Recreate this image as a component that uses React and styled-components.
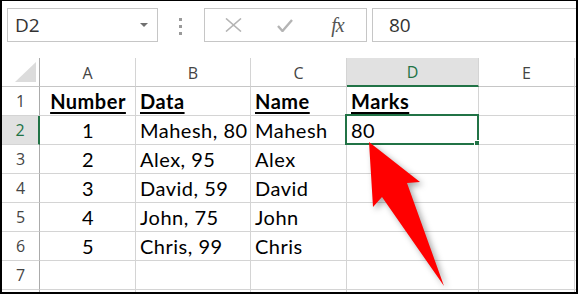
import React from 'react';
import styled, { createGlobalStyle } from 'styled-components';

const GlobalStyle = createGlobalStyle`
  body {
    margin: 0;
    background: #ffffff;
    font-family: 'Lato', 'Liberation Sans', sans-serif;
  }
`;

const Frame = styled.div`
  position: relative;
  width: 578px;
  height: 294px;
  box-sizing: border-box;
  border-style: solid;
  border-color: #000000;
  border-width: 1px 2px 2px 2px;
  background: #ffffff;
  overflow: hidden;
`;

const Toolbar = styled.div`
  display: flex;
  align-items: flex-start;
  height: 57px;
  box-sizing: border-box;
  padding: 7px 0 0 5px;
`;

const NameBox = styled.div`
  display: flex;
  align-items: center;
  justify-content: space-between;
  width: 151px;
  height: 34px;
  box-sizing: border-box;
  border: 1px solid #c6c6c6;
  padding: 0 9px 0 7px;
  font-family: 'Open Sans', 'Noto Sans', sans-serif;
  font-size: 19px;
  color: #333333;
`;

const DropArrow = styled.span`
  width: 0;
  height: 0;
  border-left: 4px solid transparent;
  border-right: 4px solid transparent;
  border-top: 4px solid #707070;
`;

const Dots = styled.div`
  display: flex;
  flex-direction: column;
  gap: 4px;
  margin: 10px 0 0 21px;
  span {
    width: 3px;
    height: 3px;
    background: #9a9a9a;
  }
`;

const ButtonGroup = styled.div`
  display: flex;
  align-items: center;
  width: 163px;
  height: 34px;
  box-sizing: border-box;
  margin-left: 22px;
  border: 1px solid #c6c6c6;
`;

const IconSlot = styled.div`
  display: flex;
  align-items: center;
  justify-content: center;
  width: ${(p) => p.$w}px;
  height: 100%;
`;

const Fx = styled.span`
  font-family: 'Liberation Serif', serif;
  font-style: italic;
  font-size: 20px;
  color: #555555;
  letter-spacing: -1px;
`;

const FormulaInput = styled.div`
  display: flex;
  align-items: center;
  flex: 1;
  height: 34px;
  box-sizing: border-box;
  margin-left: 5px;
  border: 1px solid #c6c6c6;
  border-right: none;
  padding-left: 16px;
  font-family: 'Open Sans', 'Noto Sans', sans-serif;
  font-size: 19px;
  color: #333333;
`;

const Sheet = styled.div`
  display: grid;
  grid-template-columns: 38px 96px 115px 96px 132px 96px 1fr;
  grid-auto-rows: 29px;
`;

const Cell = styled.div`
  position: relative;
  display: flex;
  align-items: flex-end;
  justify-content: ${(p) => (p.$center ? 'center' : 'flex-start')};
  box-sizing: border-box;
  border-right: 1px solid #d4d4d4;
  border-bottom: 1px solid #d4d4d4;
  padding: 0 3px 3px 4px;
  font-family: 'Lato', 'Liberation Sans', sans-serif;
  font-size: 20px;
  letter-spacing: 0.5px;
  line-height: 21px;
  color: #000000;
  white-space: nowrap;
  font-weight: ${(p) => (p.$head ? 700 : 400)};
  text-decoration: ${(p) => (p.$head ? 'underline' : 'none')};
  text-underline-offset: 3px;
  text-decoration-thickness: 2px;
`;

const ColHead = styled.div`
  display: flex;
  align-items: center;
  justify-content: center;
  box-sizing: border-box;
  border-right: 1px solid #d4d4d4;
  border-bottom: ${(p) => (p.$active ? '2px solid #217346' : '1px solid #c6c6c6')};
  background: ${(p) => (p.$active ? '#e1e1e1' : '#ffffff')};
  color: ${(p) => (p.$active ? '#217346' : '#444444')};
  font-family: 'Open Sans', 'Noto Sans', sans-serif;
  font-size: 16px;
  padding-top: 1px;
`;

const RowHead = styled.div`
  display: flex;
  align-items: center;
  justify-content: center;
  box-sizing: border-box;
  border-right: ${(p) => (p.$active ? '2px solid #217346' : '1px solid #ababab')};
  border-bottom: 1px solid #d4d4d4;
  background: ${(p) => (p.$active ? '#e1e1e1' : '#ffffff')};
  color: ${(p) => (p.$active ? '#217346' : '#444444')};
  font-family: 'Open Sans', 'Noto Sans', sans-serif;
  font-size: 16px;
`;

const Corner = styled.div`
  display: flex;
  align-items: flex-end;
  justify-content: flex-end;
  box-sizing: border-box;
  padding: 0 3px 4px 0;
  border-right: 1px solid #ababab;
  border-bottom: 1px solid #c6c6c6;
  &::after {
    content: '';
    width: 21px;
    height: 20px;
    background: #dcdcdc;
    clip-path: polygon(100% 0, 100% 100%, 0 100%);
  }
`;

const Selection = styled.div`
  position: absolute;
  top: -2px;
  left: -2px;
  right: -1px;
  bottom: -1px;
  border: 2px solid #217346;
  &::after {
    content: '';
    position: absolute;
    right: -3px;
    bottom: -3px;
    width: 6px;
    height: 6px;
    background: #217346;
    border: 1px solid #ffffff;
    box-sizing: border-box;
  }
`;

const ArrowLayer = styled.svg`
  position: absolute;
  top: -1px;
  left: -2px;
  width: 578px;
  height: 294px;
  pointer-events: none;
  filter: drop-shadow(3px 3px 3px rgba(0, 0, 0, 0.35));
`;

const columns = ['A', 'B', 'C', 'D', 'E', ''];

const rows = [
  { n: 1, head: true, cells: ['Number', 'Data', 'Name', 'Marks', '', ''] },
  { n: 2, cells: ['1', 'Mahesh, 80', 'Mahesh', '80', '', ''] },
  { n: 3, cells: ['2', 'Alex, 95', 'Alex', '', '', ''] },
  { n: 4, cells: ['3', 'David, 59', 'David', '', '', ''] },
  { n: 5, cells: ['4', 'John, 75', 'John', '', '', ''] },
  { n: 6, cells: ['5', 'Chris, 99', 'Chris', '', '', ''] },
  { n: 7, cells: ['', '', '', '', '', ''] },
  { n: 8, hidden: true, cells: ['', '', '', '', '', ''] },
];

export default function App() {
  return (
    <Frame>
      <GlobalStyle />
      <Toolbar>
        <NameBox>
          D2
          <DropArrow />
        </NameBox>
        <Dots>
          <span />
          <span />
          <span />
        </Dots>
        <ButtonGroup>
          <IconSlot $w={56}>
            <svg width="17" height="14" viewBox="0 0 17 14">
              <path d="M1 0.5 L16 13.5 M16 0.5 L1 13.5" stroke="#b4b4b4" strokeWidth="1.6" fill="none" />
            </svg>
          </IconSlot>
          <IconSlot $w={48}>
            <svg width="16" height="13" viewBox="0 0 16 13">
              <path d="M1 7 L5.5 12 L15 1" stroke="#b4b4b4" strokeWidth="2.4" fill="none" />
            </svg>
          </IconSlot>
          <IconSlot $w={57}>
            <Fx>fx</Fx>
          </IconSlot>
        </ButtonGroup>
        <FormulaInput>80</FormulaInput>
      </Toolbar>
      <Sheet>
        <Corner />
        {columns.map((c, i) => (
          <ColHead key={i} $active={c === 'D'}>
            {c}
          </ColHead>
        ))}
        {rows.map((r) => (
          <React.Fragment key={r.n}>
            <RowHead $active={r.n === 2}>{r.hidden ? '' : r.n}</RowHead>
            {r.cells.map((v, i) => (
              <Cell key={i} $center={i === 0} $head={r.head}>
                {v}
                {r.n === 2 && i === 3 && <Selection />}
              </Cell>
            ))}
          </React.Fragment>
        ))}
      </Sheet>
      <ArrowLayer viewBox="0 0 578 294">
        <polygon points="369,142 420,182 407,183 444,286 382,197 373,207" fill="#ff0000" />
      </ArrowLayer>
    </Frame>
  );
}
